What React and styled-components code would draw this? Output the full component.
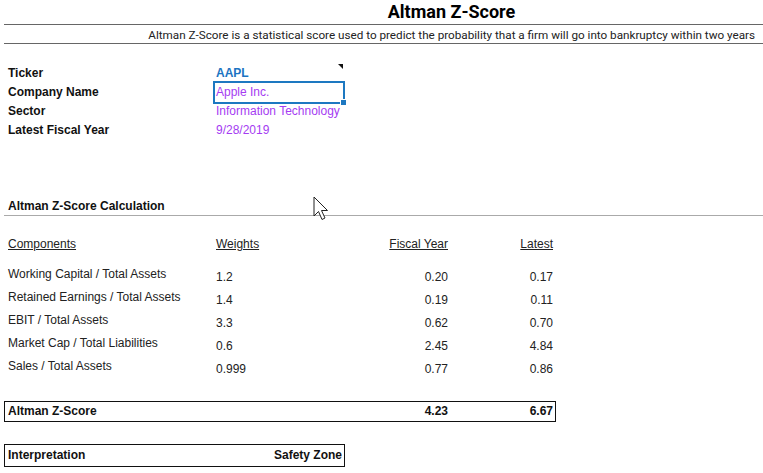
import React from 'react'
import styled, { createGlobalStyle } from 'styled-components'

const GlobalStyle = createGlobalStyle`
  html, body {
    margin: 0;
    padding: 0;
    background: #fff;
  }
  body {
    font-family: 'Liberation Sans', Arial, sans-serif;
    font-size: 12px;
    color: #111;
  }
`

const company = [
  { label: 'Ticker', value: 'AAPL', kind: 'ticker', comment: true },
  { label: 'Company Name', value: 'Apple Inc.', kind: 'input', selected: true },
  { label: 'Sector', value: 'Information Technology', kind: 'input' },
  { label: 'Latest Fiscal Year', value: '9/28/2019', kind: 'input' }
]

const components = [
  { name: 'Working Capital / Total Assets', weight: '1.2', fiscal: '0.20', latest: '0.17' },
  { name: 'Retained Earnings / Total Assets', weight: '1.4', fiscal: '0.19', latest: '0.11' },
  { name: 'EBIT / Total Assets', weight: '3.3', fiscal: '0.62', latest: '0.70' },
  { name: 'Market Cap / Total Liabilities', weight: '0.6', fiscal: '2.45', latest: '4.84' },
  { name: 'Sales / Total Assets', weight: '0.999', fiscal: '0.77', latest: '0.86' }
]

const Page = styled.div`
  position: relative;
  width: 763px;
  height: 473px;
  overflow: hidden;
`

const Title = styled.h1`
  margin: 0 0 0 4px;
  padding: 0 0 0 136px;
  height: 24px;
  border-bottom: 1px solid #666;
  font-family: Roboto, sans-serif;
  font-size: 18px;
  font-weight: 700;
  line-height: 24px;
  text-align: center;
  color: #000;
`

const Subtitle = styled.div`
  margin-left: 4px;
  padding-right: 8px;
  height: 18px;
  border-bottom: 1px solid #666;
  font-family: Roboto, sans-serif;
  font-size: 11.7px;
  line-height: 21px;
  text-align: right;
  color: #222;
`

const InfoGrid = styled.div`
  display: grid;
  grid-template-columns: 205px 132px;
  grid-auto-rows: 19px;
  margin-top: 20px;
  padding-left: 8px;
`

const InfoLabel = styled.div`
  font-weight: 700;
  line-height: 19px;
  color: #111;
`

const InfoValue = styled.div`
  position: relative;
  box-sizing: border-box;
  padding-left: 1px;
  margin: -2px 0;
  height: 23px;
  line-height: 19px;
  font-weight: ${p => (p.$kind === 'ticker' ? 700 : 400)};
  color: ${p => (p.$kind === 'ticker' ? '#1b74c2' : '#a53cf2')};
  border: 2px solid ${p => (p.$selected ? '#1d78c1' : 'transparent')};
`

const Handle = styled.span`
  position: absolute;
  right: -4px;
  bottom: -4px;
  width: 5px;
  height: 5px;
  background: #1d78c1;
  border: 1px solid #fff;
`

const CommentMark = styled.span`
  position: absolute;
  right: 0;
  top: 0;
  width: 0;
  height: 0;
  border-top: 5px solid #111;
  border-left: 5px solid transparent;
`

const SectionHead = styled.div`
  margin: 57px 0 0 4px;
  padding-left: 4px;
  height: 18px;
  border-bottom: 1px solid #aaa;
  font-weight: 700;
  line-height: 18px;
`

const Table = styled.div`
  display: grid;
  grid-template-columns: 208px 120px 112px 105px;
  padding-left: 8px;
  margin-top: 19px;
`

const Cell = styled.div`
  height: ${p => (p.$head ? 30 : 23)}px;
  line-height: 18px;
  text-align: ${p => (p.$right ? 'right' : 'left')};
  padding-top: ${p => (p.$value ? 3 : 0)}px;
  box-sizing: border-box;
  text-decoration: ${p => (p.$head ? 'underline' : 'none')};
  color: #222;
`

const ScoreBox = styled.div`
  display: grid;
  grid-template-columns: ${p => p.$cols};
  width: fit-content;
  margin: ${p => p.$top}px 0 0 4px;
  padding: 0 2px 0 3px;
  height: ${p => p.$height}px;
  border: 1px solid #111;
  font-weight: 700;
  line-height: ${p => p.$height}px;
  color: #111;
`

const Right = styled.div`
  text-align: right;
`

const Cursor = styled.svg`
  position: absolute;
  left: 313px;
  top: 196px;
`

export default function App() {
  return (
    <Page>
      <GlobalStyle />
      <Title>Altman Z-Score</Title>
      <Subtitle>
        Altman Z-Score is a statistical score used to predict the probability that a firm will go into bankruptcy within two years
      </Subtitle>

      <InfoGrid>
        {company.map(row => (
          <React.Fragment key={row.label}>
            <InfoLabel>{row.label}</InfoLabel>
            <InfoValue $kind={row.kind} $selected={row.selected}>
              {row.value}
              {row.selected && <Handle />}
              {row.comment && <CommentMark />}
            </InfoValue>
          </React.Fragment>
        ))}
      </InfoGrid>

      <SectionHead>Altman Z-Score Calculation</SectionHead>

      <Table>
        <Cell $head>Components</Cell>
        <Cell $head>Weights</Cell>
        <Cell $head $right>Fiscal Year</Cell>
        <Cell $head $right>Latest</Cell>
        {components.map(c => (
          <React.Fragment key={c.name}>
            <Cell>{c.name}</Cell>
            <Cell $value>{c.weight}</Cell>
            <Cell $value $right>{c.fiscal}</Cell>
            <Cell $value $right>{c.latest}</Cell>
          </React.Fragment>
        ))}
      </Table>

      <ScoreBox $cols='328px 112px 105px' $top={21} $height={19}>
        <div>Altman Z-Score</div>
        <Right>4.23</Right>
        <Right>6.67</Right>
      </ScoreBox>

      <ScoreBox $cols='168px 166px' $top={22} $height={21}>
        <div>Interpretation</div>
        <Right>Safety Zone</Right>
      </ScoreBox>

      <Cursor width='18' height='27' viewBox='0 0 18 27'>
        <path
          d='M1 1 L1 20 L5.5 15.5 L9 23.5 L12 22 L8.5 14.5 L14.5 14.5 Z'
          fill='#fff'
          stroke='#222'
          strokeWidth='1'
          strokeLinejoin='miter'
        />
      </Cursor>
    </Page>
  )
}
